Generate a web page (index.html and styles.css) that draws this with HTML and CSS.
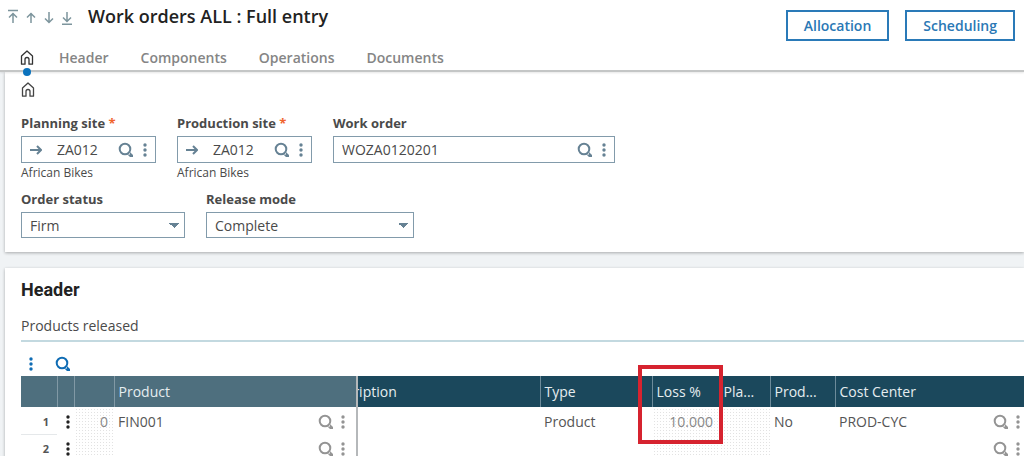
FILE: index.html
```html
<!DOCTYPE html>
<html lang="en">
<head>
    <meta charset="UTF-8">
    <meta name="viewport" content="width=device-width, initial-scale=1.0">
    <title>Work orders ALL : Full entry</title>
    <link rel="stylesheet" href="styles.css">
</head>
<body>
    <!-- shared icons -->
    <svg class="sprite" aria-hidden="true">
        <symbol id="search" viewBox="0 0 16 16">
            <circle cx="7" cy="7" r="5.300" fill="none" stroke="currentColor" stroke-width="2"/>
            <path d="M9.500 12.500h2.500v-2.500l3 3v2h-3z" fill="currentColor"/>
        </symbol>
        <symbol id="dots" viewBox="0 0 4 14">
            <circle cx="2" cy="2" r="1.700" fill="currentColor"/>
            <circle cx="2" cy="7" r="1.700" fill="currentColor"/>
            <circle cx="2" cy="12" r="1.700" fill="currentColor"/>
        </symbol>
        <symbol id="go" viewBox="0 0 12 10">
            <path d="M0 5h11M7 1l4 4-4 4" fill="none" stroke="currentColor" stroke-width="2"/>
        </symbol>
        <symbol id="home" viewBox="0 0 14 15">
            <path d="M7 1l5.500 5v8.200H9V9.500a2 2 0 0 0-4 0v4.700H1.500V6z" fill="none" stroke="currentColor" stroke-width="1.300" stroke-linejoin="round"/>
        </symbol>
    </svg>

    <header class="topbar">
        <div class="title-row">
            <div class="record-nav">
                <button type="button" aria-label="First"><svg width="12" height="16" viewBox="0 0 12 16"><path d="M1 1.500h10M6 14V4M2 8.500L6 4.500l4 4"/></svg></button>
                <button type="button" aria-label="Previous"><svg width="12" height="16" viewBox="0 0 12 16"><path d="M6 14V4M2 8.500L6 4.500l4 4"/></svg></button>
                <button type="button" aria-label="Next"><svg width="12" height="16" viewBox="0 0 12 16"><path d="M6 3v11M2 9.500l4 4 4-4"/></svg></button>
                <button type="button" aria-label="Last"><svg width="12" height="16" viewBox="0 0 12 16"><path d="M6 3v10M2 8.500l4 4 4-4M1 15.200h10"/></svg></button>
            </div>
            <h1>Work orders ALL : Full entry</h1>
            <div class="actions">
                <button type="button">Allocation</button>
                <button type="button">Scheduling</button>
            </div>
        </div>
        <nav class="tabs">
            <a href="#top" class="home active" aria-label="Home"><svg width="14" height="15"><use href="#home"/></svg></a>
            <a href="#header">Header</a>
            <a href="#components">Components</a>
            <a href="#operations">Operations</a>
            <a href="#documents">Documents</a>
        </nav>
    </header>

    <main>
        <section class="card general" id="top">
            <svg class="section-icon" width="14" height="15"><use href="#home"/></svg>
            <div class="fields">
                <div class="field">
                    <label for="planningSite">Planning site <span class="required">*</span></label>
                    <div class="lookup site">
                        <button type="button" aria-label="Open planning site"><svg width="12" height="10"><use href="#go"/></svg></button>
                        <input type="text" id="planningSite" value="ZA012">
                        <button type="button" aria-label="Search"><svg width="16" height="16"><use href="#search"/></svg></button>
                        <button type="button" aria-label="More"><svg width="4" height="14"><use href="#dots"/></svg></button>
                    </div>
                    <p class="hint">African Bikes</p>
                </div>
                <div class="field">
                    <label for="productionSite">Production site <span class="required">*</span></label>
                    <div class="lookup site">
                        <button type="button" aria-label="Open production site"><svg width="12" height="10"><use href="#go"/></svg></button>
                        <input type="text" id="productionSite" value="ZA012">
                        <button type="button" aria-label="Search"><svg width="16" height="16"><use href="#search"/></svg></button>
                        <button type="button" aria-label="More"><svg width="4" height="14"><use href="#dots"/></svg></button>
                    </div>
                    <p class="hint">African Bikes</p>
                </div>
                <div class="field">
                    <label for="workOrder">Work order</label>
                    <div class="lookup order">
                        <input type="text" id="workOrder" value="WOZA0120201">
                        <button type="button" aria-label="Search"><svg width="16" height="16"><use href="#search"/></svg></button>
                        <button type="button" aria-label="More"><svg width="4" height="14"><use href="#dots"/></svg></button>
                    </div>
                </div>
            </div>
            <div class="fields">
                <div class="field">
                    <label for="orderStatus">Order status</label>
                    <select id="orderStatus" class="status">
                        <option>Firm</option>
                    </select>
                </div>
                <div class="field">
                    <label for="releaseMode">Release mode</label>
                    <select id="releaseMode" class="mode">
                        <option>Complete</option>
                    </select>
                </div>
            </div>
        </section>

        <section class="card products" id="header">
            <h2>Header</h2>
            <h3>Products released</h3>
            <div class="grid-tools">
                <button type="button" aria-label="Grid menu"><svg width="4" height="14"><use href="#dots"/></svg></button>
                <button type="button" aria-label="Search in grid"><svg width="16" height="16"><use href="#search"/></svg></button>
            </div>
            <div class="grid">
                <table class="frozen">
                    <thead>
                        <tr>
                            <th class="col-num"></th>
                            <th class="col-menu"></th>
                            <th class="col-line"></th>
                            <th class="col-product">Product</th>
                        </tr>
                    </thead>
                    <tbody>
                        <tr>
                            <td class="row-num">1</td>
                            <td class="row-menu"><svg width="4" height="14"><use href="#dots"/></svg></td>
                            <td class="locked">0</td>
                            <td><div class="cell">FIN001<span class="cell-icons"><svg width="16" height="16"><use href="#search"/></svg><svg width="4" height="14"><use href="#dots"/></svg></span></div></td>
                        </tr>
                        <tr>
                            <td class="row-num">2</td>
                            <td class="row-menu"><svg width="4" height="14"><use href="#dots"/></svg></td>
                            <td class="locked"></td>
                            <td><div class="cell"><span class="cell-icons"><svg width="16" height="16"><use href="#search"/></svg><svg width="4" height="14"><use href="#dots"/></svg></span></div></td>
                        </tr>
                    </tbody>
                </table>
                <div class="scroll-pane">
                    <table class="scrolled">
                        <thead>
                            <tr>
                                <th class="col-desc">Description</th>
                                <th class="col-type">Type</th>
                                <th class="col-loss">Loss %</th>
                                <th class="col-plan">Pla...</th>
                                <th class="col-prod">Prod...</th>
                                <th>Cost Center</th>
                            </tr>
                        </thead>
                        <tbody>
                            <tr>
                                <td></td>
                                <td>Product</td>
                                <td class="locked">10.000</td>
                                <td class="locked"></td>
                                <td>No</td>
                                <td><div class="cell">PROD-CYC<span class="cell-icons"><svg width="16" height="16"><use href="#search"/></svg><svg width="4" height="14"><use href="#dots"/></svg></span></div></td>
                            </tr>
                            <tr>
                                <td></td>
                                <td></td>
                                <td class="locked"></td>
                                <td class="locked"></td>
                                <td></td>
                                <td><div class="cell"><span class="cell-icons"><svg width="16" height="16"><use href="#search"/></svg><svg width="4" height="14"><use href="#dots"/></svg></span></div></td>
                            </tr>
                        </tbody>
                    </table>
                </div>
                <div class="highlight"></div>
            </div>
        </section>
    </main>
</body>
</html>
```

FILE: styles.css
```css
* {
    box-sizing: border-box;
}

body {
    margin: 0;
    height: 100vh;
    overflow: hidden;
    font-family: "Open Sans", sans-serif;
    font-size: 14px;
    color: #4a4a4a;
    background-color: #f0f3f5;
}

button {
    padding: 0;
    border: none;
    background: none;
    color: inherit;
    font-family: inherit;
    cursor: pointer;
}

svg {
    display: block;
}

.sprite {
    position: absolute;
    width: 0;
    height: 0;
}

/* top bar */
.topbar {
    position: relative;
    background-color: #fff;
    border-bottom: 2px solid #c4c6c6;
    box-shadow: 0 1px 2px rgba(0, 0, 0, 0.1);
}

.title-row {
    display: flex;
    align-items: flex-start;
    height: 44px;
    padding: 0 9px 0 7px;
}

.record-nav {
    display: flex;
    gap: 6px;
    padding-top: 9px;
    color: #7d959d;
}

.record-nav path {
    fill: none;
    stroke: currentColor;
    stroke-width: 1.5;
}

h1 {
    margin: 0 0 0 15px;
    padding-top: 4px;
    font-size: 18px;
    line-height: 24px;
    font-weight: 600;
    color: #222;
}

.actions {
    display: flex;
    gap: 16px;
    margin-left: auto;
    padding-top: 10px;
}

.actions button {
    height: 31px;
    padding: 0 16px;
    border: 2px solid #2a7ab8;
    font-size: 14px;
    font-weight: 600;
    color: #2a78b5;
}

.tabs {
    display: flex;
    align-items: center;
    gap: 32px;
    height: 26px;
    padding-left: 20px;
}

.tabs a {
    font-size: 14px;
    font-weight: 600;
    color: #858585;
    text-decoration: none;
}

.tabs .home {
    position: relative;
    margin-right: -7px;
    color: #333;
}

.tabs .active::after {
    content: "";
    position: absolute;
    left: 3px;
    top: 18px;
    width: 8px;
    height: 8px;
    border-radius: 50%;
    background-color: #0a72bd;
}

/* cards */
.card {
    margin-left: 5px;
    padding-left: 16px;
    background-color: #fff;
    box-shadow: 0 1px 3px rgba(0, 0, 0, 0.3);
}

.general {
    margin-bottom: 16px;
    padding-top: 10px;
    padding-bottom: 14px;
}

.section-icon {
    color: #444;
}

.fields {
    display: flex;
    gap: 21px;
}

.section-icon + .fields {
    margin-top: 17px;
}

.fields + .fields {
    margin-top: 9px;
}

label {
    display: block;
    margin-bottom: 4px;
    font-size: 13px;
    line-height: 18px;
    font-weight: 700;
}

.required {
    color: #f0642d;
}

.lookup {
    display: flex;
    align-items: center;
    height: 27px;
    padding: 0 8px;
    border: 1px solid #829bab;
    color: #668294;
}

.site {
    width: 135px;
}

.order {
    width: 282px;
}

.lookup input {
    flex: 1;
    min-width: 0;
    padding: 0;
    border: none;
    background: none;
    font-family: inherit;
    font-size: 14px;
    color: #4a4a4a;
    outline: none;
}

.site input {
    padding-left: 15px;
}

.lookup button + button {
    margin-left: 9px;
}

.hint {
    margin: 2px 0 0;
    font-size: 12px;
    line-height: 16px;
}

select {
    display: block;
    height: 26px;
    padding: 0 8px;
    border: 1px solid #829bab;
    border-radius: 0;
    appearance: none;
    font-family: inherit;
    font-size: 14px;
    color: #4a4a4a;
    background-color: #fff;
    background-image: linear-gradient(to bottom left, #668294 50%, transparent 50%), linear-gradient(to bottom right, #668294 50%, transparent 50%);
    background-size: 5px 5px;
    background-position: right 10px center, right 5px center;
    background-repeat: no-repeat;
}

.status {
    width: 164px;
}

.mode {
    width: 208px;
}

/* products */
h2 {
    margin: 0;
    padding-top: 10px;
    font-family: Roboto, sans-serif;
    font-size: 18px;
    line-height: 24px;
    font-weight: 700;
    color: #222;
}

h3 {
    margin: 0;
    padding: 14px 0 4px;
    border-bottom: 2px solid #c3d9e0;
    font-size: 14px;
    line-height: 20px;
    font-weight: 400;
}

.grid-tools {
    display: flex;
    align-items: center;
    gap: 22px;
    height: 34px;
    padding: 10px 8px 0;
    color: #0f6cb4;
}

.grid {
    position: relative;
    display: flex;
}

table {
    border-collapse: collapse;
    table-layout: fixed;
}

.frozen {
    width: 337px;
    flex: none;
    border-right: 2px solid #b5b8ba;
}

.scroll-pane {
    flex: 1;
    overflow: hidden;
}

/* shifted left by the scroll offset */
.scrolled {
    width: calc(100% + 38px);
    margin-left: -38px;
}

th {
    height: 31px;
    padding: 0 4px;
    border-left: 1px solid #6d8b9a;
    text-align: left;
    font-weight: 400;
    color: #e6edf0;
    background-color: #1b485c;
    white-space: nowrap;
}

.frozen th {
    border-left-color: #8199a5;
    background-color: #4e6f7e;
}

th:first-child {
    border-left: none;
}

.scrolled .col-desc {
    padding-left: 2px;
}

td {
    height: 27px;
    padding: 2px 4px 0;
    color: #555;
    white-space: nowrap;
}

.col-num {
    width: 36px;
}

.col-menu {
    width: 17px;
}

.col-line {
    width: 40px;
}

.col-desc {
    width: 220px;
}

.col-type {
    width: 112px;
}

.col-loss {
    width: 67px;
}

.col-plan {
    width: 51px;
}

.col-prod {
    width: 65px;
}

.row-num {
    padding-right: 8px;
    border-bottom: 1px solid #e5e8ea;
    text-align: right;
    font-size: 11px;
    font-weight: 700;
}

.row-menu {
    padding: 2px 0 0 9px;
    color: #222;
}

/* read-only cells */
.locked {
    padding-right: 6px;
    text-align: right;
    color: #888;
    background-image: linear-gradient(#fff 2px, transparent 2px), linear-gradient(to right, #fff 2px, #e2e2e2 2px);
    background-size: 3px 3px;
}

.cell {
    display: flex;
    align-items: center;
}

.cell-icons {
    display: flex;
    align-items: center;
    gap: 7px;
    margin-left: auto;
    padding-right: 7px;
    color: #949494;
}

.scrolled .cell-icons {
    padding-right: 0;
}

.highlight {
    position: absolute;
    left: 617px;
    top: -11px;
    width: 85px;
    height: 79px;
    border: 4px solid #d6232f;
}
```
